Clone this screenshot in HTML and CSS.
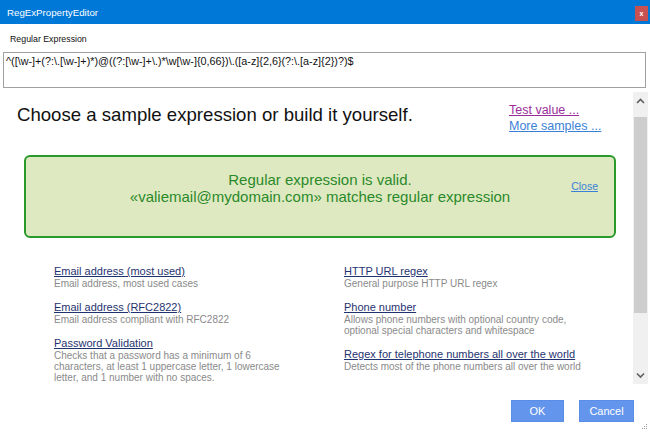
FILE: index.html
```html
<!DOCTYPE html>
<html>
<head>
<meta charset="utf-8">
<link rel="stylesheet" href="styles.css">
</head>
<body>
<div class="window">
  <div class="titlebar">
    <span class="title">RegExPropertyEditor</span>
    <span class="close">x</span>
  </div>
  <div class="editor">
    <div class="label">Regular Expression</div>
    <div class="regex">^([\w-]+(?:\.[\w-]+)*)@((?:[\w-]+\.)*\w[\w-]{0,66})\.([a-z]{2,6}(?:\.[a-z]{2})?)$</div>
  </div>
  <div class="main">
    <div class="content">
      <div class="header">
        <h1 class="heading">Choose a sample expression or build it yourself.</h1>
        <div class="links">
          <a class="link visited">Test value ...</a>
          <a class="link">More samples ...</a>
        </div>
      </div>
      <div class="valid">
        <div class="valid-text">Regular expression is valid.<br>«valiemail@mydomain.com» matches regular expression</div>
        <a class="close-link">Close</a>
      </div>
      <div class="samples">
        <div class="col left">
          <div class="sample">
            <a class="s-title">Email address (most used)</a>
            <div class="s-desc">Email address, most used cases</div>
          </div>
          <div class="sample">
            <a class="s-title">Email address (RFC2822)</a>
            <div class="s-desc">Email address compliant with RFC2822</div>
          </div>
          <div class="sample">
            <a class="s-title">Password Validation</a>
            <div class="s-desc">Checks that a password has a minimum of 6 characters, at least 1 uppercase letter, 1 lowercase letter, and 1 number with no spaces.</div>
          </div>
        </div>
        <div class="col right">
          <div class="sample">
            <a class="s-title">HTTP URL regex</a>
            <div class="s-desc">General purpose HTTP URL regex</div>
          </div>
          <div class="sample">
            <a class="s-title">Phone number</a>
            <div class="s-desc">Allows phone numbers with optional country code, optional special characters and whitespace</div>
          </div>
          <div class="sample">
            <a class="s-title">Regex for telephone numbers all over the world</a>
            <div class="s-desc">Detects most of the phone numbers all over the world</div>
          </div>
        </div>
      </div>
    </div>
    <div class="scrollbar">
      <svg class="arrow" width="15" height="17" viewBox="0 0 15 17"><path d="M4 11 L7.5 7.5 L11 11" fill="none" stroke="#606060" stroke-width="1.6"/></svg>
      <div class="track"><div class="thumb"></div></div>
      <svg class="arrow" width="15" height="17" viewBox="0 0 15 17"><path d="M4 6.5 L7.5 10 L11 6.5" fill="none" stroke="#606060" stroke-width="1.6"/></svg>
    </div>
  </div>
  <div class="footer">
    <button class="btn ok">OK</button>
    <button class="btn cancel">Cancel</button>
  </div>
  <svg class="grip" width="6" height="6" viewBox="0 0 6 6"><rect x="4" y="0" width="1" height="1" fill="#999"/><rect x="2" y="2" width="1" height="1" fill="#999"/><rect x="4" y="2" width="1" height="1" fill="#999"/><rect x="0" y="4" width="1" height="1" fill="#999"/><rect x="2" y="4" width="1" height="1" fill="#999"/><rect x="4" y="4" width="1" height="1" fill="#999"/></svg>
</div>
</body>
</html>
```
FILE: styles.css
```css
* { box-sizing: border-box; }
html, body { margin: 0; padding: 0; }
body { font-family: "Liberation Sans", Arial, sans-serif; background: #fff; }
.window { width: 650px; height: 432px; position: relative; background: #fff; overflow: hidden; }
.titlebar { height: 24px; background: #0078d7; display: flex; align-items: center; justify-content: space-between; padding: 0 2px 0 7px; }
.title { color: #fff; font-size: 9.7px; }
.close { width: 13px; height: 15px; background: #c75050; color: #fff; font-size: 7px; display: flex; align-items: center; justify-content: center; font-weight: bold; margin-top: 3px; }
.editor { padding: 10px 4px 0 3px; }
.label { font-size: 8.8px; color: #111; padding-left: 7px; height: 18px; line-height: 11px; }
.regex { height: 36px; border: 1px solid #a0a0a0; font-size: 10.8px; padding: 2px 2px; color: #111; }
.main { display: flex; margin-top: 4px; height: 292px; }
.content { flex: 1; padding: 0 0 0 17px; }
.scrollbar { width: 15px; margin-right: 2px; background: #f0f0f0; display: flex; flex-direction: column; }
.arrow { display: block; }
.track { flex: 1; padding-top: 8px; }
.thumb { height: 196px; background: #cdcdcd; margin: 0 1px; }
.header { display: flex; align-items: flex-start; padding-top: 10px; height: 63px; }
.heading { margin: 0; font-weight: normal; font-size: 18.6px; line-height: 20px; color: #111; width: 492px; padding-top: 3px; white-space: nowrap; }
.links { display: flex; flex-direction: column; font-size: 12.5px; line-height: 16px; }
.link { color: #3a7fd8; text-decoration: underline; }
.link.visited { color: #9b2d9b; }
.valid { position: relative; width: 592px; height: 83px; margin-left: 7px; border: 2px solid #2a9a2a; border-radius: 6px; background: #dfe9c1; padding-top: 14px; }
.valid-text { text-align: center; color: #2a8a2a; font-size: 15px; line-height: 17px; }
.close-link { position: absolute; right: 16px; top: 23px; color: #3a7fd8; text-decoration: underline; font-size: 10.5px; }
.samples { display: flex; padding: 27px 0 0 37px; }
.col { display: flex; flex-direction: column; gap: 12px; }
.col.left { width: 290px; }
.col.right { width: 240px; }
.s-title { color: #1f3370; text-decoration: underline; font-size: 11px; line-height: 13px; display: block; }
.s-desc { color: #8a8a8a; font-size: 10px; line-height: 11px; margin-top: 0; }
.left .s-desc { width: 232px; }
.footer { display: flex; justify-content: flex-end; gap: 15px; padding: 16px 16px 0 0; }
.btn { height: 22px; border: 1px solid #5a8de6; background: #6495ed; color: #fff; font-family: "Liberation Sans", Arial, sans-serif; font-size: 11px; padding: 0; }
.btn.ok { width: 53px; }
.btn.cancel { width: 55px; }
.grip { position: absolute; right: 2px; bottom: 2px; }
```
